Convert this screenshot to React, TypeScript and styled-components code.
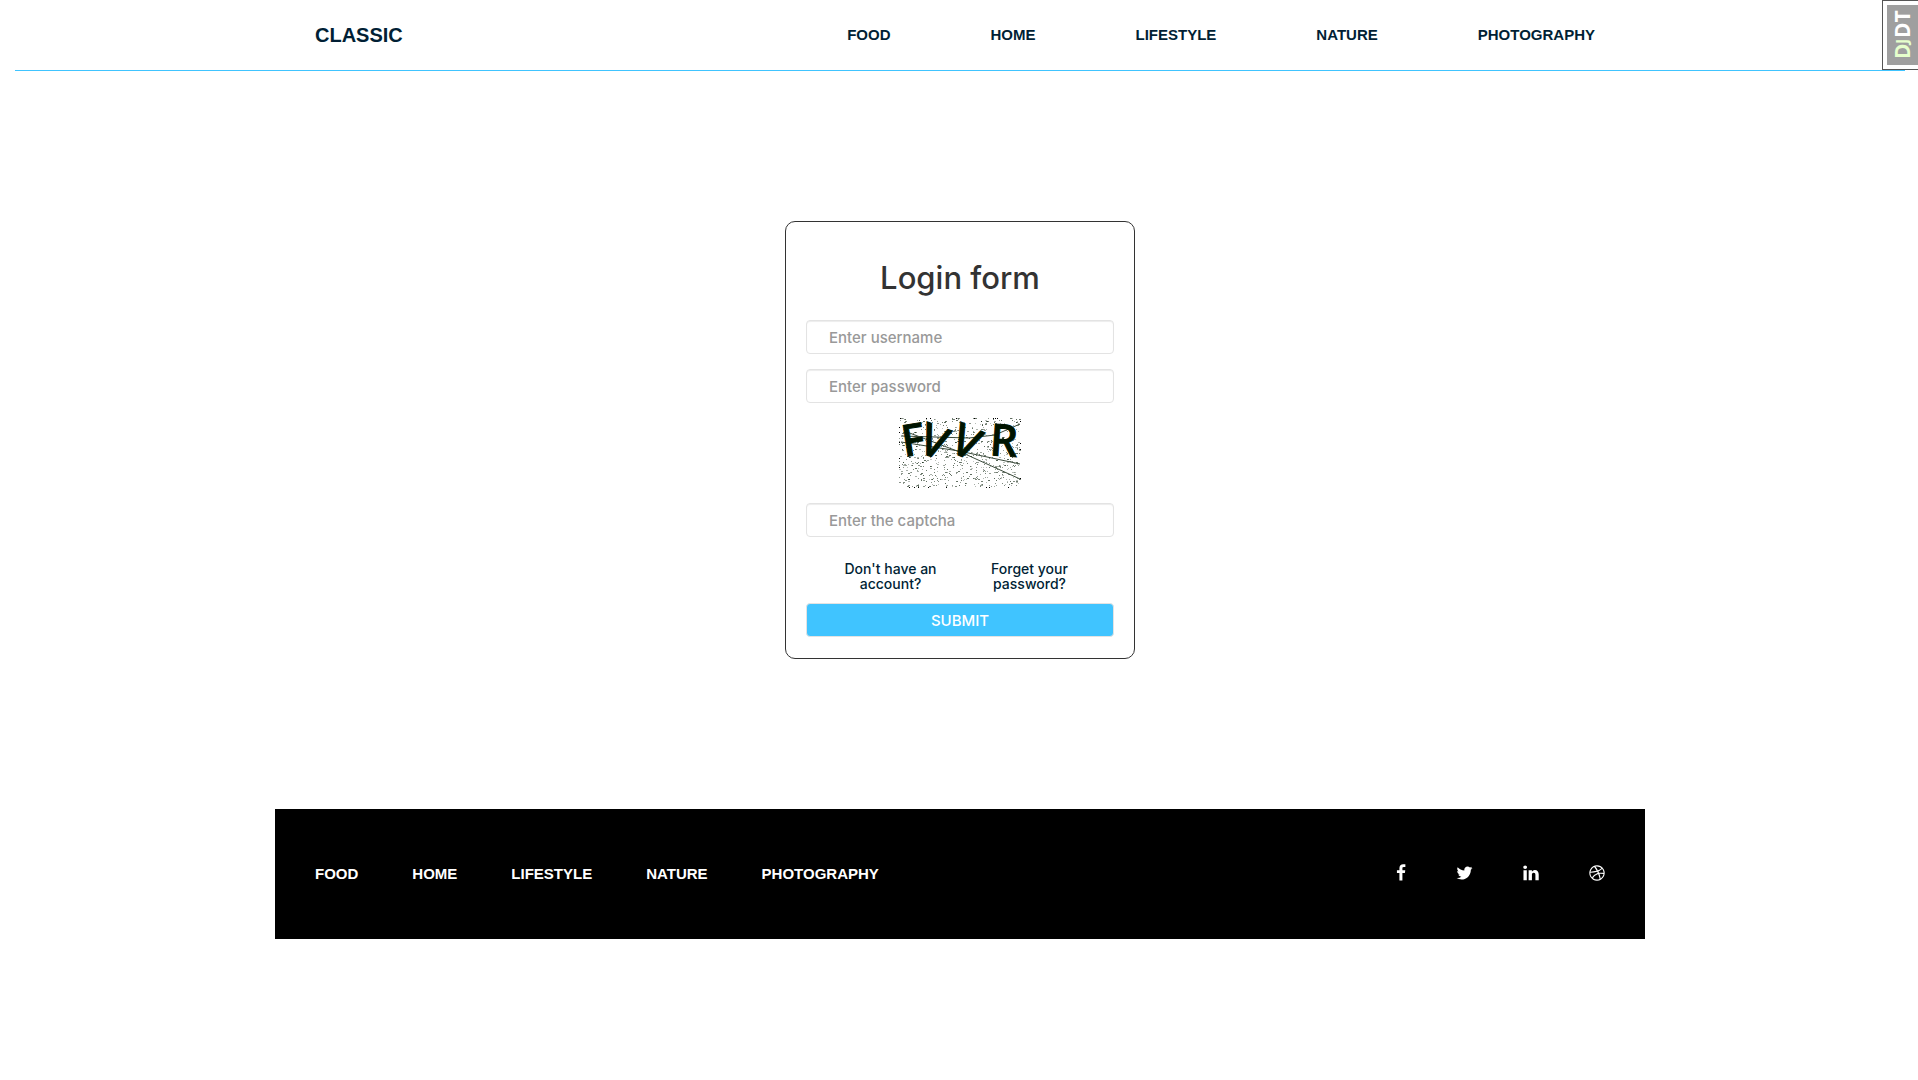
import React from "react";
import styled, { createGlobalStyle, css } from "styled-components";

const navy = "#011f35";
const sky = "#40c4ff";
const formFont = css`
  font-family: Inter, "Open Sans", sans-serif;
  font-weight: 500;
`;

const GlobalStyle = createGlobalStyle`
  *, *::before, *::after { box-sizing: border-box; }
  body {
    margin: 0;
    padding-left: 2px;
    background: #fff;
    color: #333;
    font-family: "Liberation Sans", Arial, sans-serif;
    font-size: 15px;
  }
  a { color: inherit; text-decoration: none; }
`;

const Header = styled.header`
  margin: 0 13px;
  border-bottom: 1px solid ${sky};
`;

const HeaderInner = styled.div`
  max-width: 1290px;
  height: 70px;
  margin: 0 auto;
  padding-right: 10px;
  display: flex;
  align-items: center;
  justify-content: space-between;
`;

const Brand = styled.a`
  && { color: ${navy}; }
  font-size: 20px;
  font-weight: 700;
`;

const NavList = styled.ul<{ $gap: number; $color: string }>`
  display: flex;
  flex-wrap: wrap;
  gap: ${(p) => p.$gap}px;
  margin: 0;
  padding: 0;
  list-style: none;
  font-weight: 700;
  line-height: 20px;
  color: ${(p) => p.$color};
`;

const Main = styled.main`
  display: flex;
  justify-content: center;
  padding: 150px 15px;
`;

const LoginForm = styled.form`
  ${formFont}
  width: 350px;
  display: flex;
  flex-direction: column;
  align-items: stretch;
  gap: 15px;
  padding: 39px 20px 21px;
  border: 1px solid #333;
  border-radius: 10px;
`;

const Title = styled.h2`
  margin: 0 0 10px;
  font-size: 31px;
  line-height: 34px;
  font-weight: 500;
  text-align: center;
`;

const Field = styled.input`
  ${formFont}
  width: 100%;
  height: 34px;
  padding: 6px 22px;
  border: 1px solid #e3e3e3;
  border-radius: 4px;
  box-shadow: inset 0 1px 1px rgba(0, 0, 0, 0.075);
  background: #fff;
  color: #555;
  font-size: 15px;
  &::placeholder { color: #999; opacity: 1; }
`;

const Captcha = styled.svg`
  align-self: center;
  display: block;
  overflow: visible;
`;

const FormLinks = styled.div`
  display: grid;
  grid-template-columns: 1fr 1fr;
  gap: 30px;
  padding: 9px 30px 0;
  margin-bottom: -3px;
  color: ${navy};
  font-size: 14px;
  line-height: 15px;
  text-align: center;
`;

const Submit = styled.button`
  ${formFont}
  height: 34px;
  border: 1px solid #e3e3e3;
  border-radius: 4px;
  background: ${sky};
  color: #fff;
  font-size: 15px;
  cursor: pointer;
`;

const Footer = styled.footer`
  max-width: 1370px;
  min-height: 130px;
  margin: 0 auto;
  padding: 0 40px;
  display: flex;
  align-items: center;
  justify-content: space-between;
  background: #000;
`;

const Social = styled.div`
  display: flex;
  align-items: center;
  gap: 50px;
  padding-bottom: 3px;
  color: #fff;
`;

const SocialIcon = styled.svg<{ $width: number }>`
  display: block;
  width: ${(p) => p.$width}px;
  height: 18px;
  fill: currentColor;
`;

const DebugHandle = styled.button`
  position: fixed;
  top: 0;
  right: 0;
  width: 36px;
  height: 70px;
  padding: 4px 0 4px 4px;
  border: 1px solid #555;
  border-right: 0;
  background: #fff;
`;

const DebugLabel = styled.span`
  display: flex;
  align-items: center;
  justify-content: center;
  width: 31px;
  height: 60px;
  background: #9f9f9f;
  color: #fff;
  font: 700 21px/31px "Open Sans", sans-serif;
  writing-mode: vertical-rl;
  transform: rotate(180deg);
`;

const DebugAccent = styled.span<{ $small?: boolean }>`
  color: #e6ffcc;
  font-size: ${(p) => (p.$small ? 16 : 21)}px;
`;

const categories = ["FOOD", "HOME", "LIFESTYLE", "NATURE", "PHOTOGRAPHY"];

const socials = [
  { name: "Facebook", width: 10, box: "384 0 1024 1792", path: "M1343 12v264h-157q-86 0-116 36t-30 108v189h293l-39 296h-254v759h-306v-759h-255v-296h255v-218q0-186 104-288.500t277-102.500q147 0 228 12z" },
  { name: "Twitter", width: 17, box: "64 0 1664 1792", path: "M1684 408q-67 98-162 167 1 14 1 42 0 130-38 259.500t-115.500 248.500-184.500 210.500-258 146-323 54.500q-271 0-496-145 35 4 78 4 225 0 401-138-105-2-188-64.500t-114-159.500q33 5 61 5 43 0 85-11-112-23-185.500-111.500t-73.500-205.500v-4q68 38 146 41-66-44-105-115t-39-154q0-88 44-163 121 149 294.500 238.500t371.500 99.500q-8-38-8-74 0-134 94.500-228.500t228.500-94.500q140 0 236 102 109-21 205-78-37 115-142 178 93-10 186-50z" },
  { name: "LinkedIn", width: 16, box: "128 0 1536 1792", path: "M477 625v991h-330v-991h330zm21-306q1 73-50.500 122t-135.500 49h-2q-82 0-132-49t-50-122q0-74 51.500-122.500t134.500-48.500 133 48.500 51 122.500zm1166 729v568h-329v-530q0-105-40.500-164.500t-126.500-59.500q-63 0-105.500 34.500t-63.500 85.500q-11 30-11 81v553h-329q2-399 2-647t-1-296l-1-48h329v144h-2q20-32 41-56t56.500-52 87-43.500 114.500-15.500q171 0 275 113.500t104 332.500z" },
  { name: "Dribbble", width: 16, box: "128 0 1536 1792", path: "M1152 1500q-42-241-140-498h-2l-2 1q-16 6-43 16.500t-101 49-137 82-131 114.500-103 148l-15-11q184 150 418 150 132 0 256-52zm-185-607q-21-49-53-111-311 93-673 93-1 7-1 21 0 124 44 236.500t124 201.500q50-89 123.500-166.500t142.500-124.500 130.500-81 99.500-48l37-13q4-1 13-3.500t13-4.500zm-107-212q-120-213-244-378-138 65-234 186t-128 272q302 0 606-80zm684 319q-210-60-409-29 87 239 128 469 111-75 185-189.500t96-250.500zm-805-741q-1 0-2 1 1-1 2-1zm590 145q-185-164-433-164-76 0-155 19 131 170 246 382 69-26 130-60.500t96.500-61.500 65.500-57 37.500-40.500zm223 485q-3-232-149-410l-1 1q-9 12-19 24.500t-43.500 44.500-71 60.500-100 65-131.500 64.500q25 53 44 95 2 5 6.500 17t7.500 17q36-5 74.500-7t73.500-2 69 1.500 64 4 56.500 5.500 48 6.500 36.500 6 25 4.500zm112 7q0 209-103 385.500t-279.500 279.500-385.500 103-385.500-103-279.500-279.500-103-385.500 103-385.500 279.500-279.500 385.500-103 385.500 103 279.500 279.500 103 385.500z" },
];

// Deterministic noise so the captcha looks the same on every render.
function makeSpecks(count: number) {
  let seed = 7919;
  const next = () => {
    seed = (seed * 1103515245 + 12345) % 2147483648;
    return seed / 2147483648;
  };
  return Array.from({ length: count }, () => ({
    x: Math.floor(next() * 121),
    y: Math.floor(next() * 69),
    w: next() > 0.7 ? 2 : 1,
    o: 0.25 + next() * 0.45,
  }));
}
const specks = makeSpecks(800);

const edgeDots = [
  [1, 0], [27, 0], [31, 0], [57, 0], [75, 0], [94, 0], [96, 0], [98, 0],
  [0, 9], [0, 14], [0, 24], [0, 40], [0, 49], [121, 3], [121, 25], [121, 31], [121, 60],
  [10, 69], [15, 69], [19, 69], [29, 69], [47, 69], [87, 69], [90, 69], [109, 69],
];

const letters = [
  { char: "F", x: 5, y: 39, angle: -9, anchor: "start" },
  { char: "V", x: 30, y: 38, angle: 20, anchor: "middle" },
  { char: "V", x: 61, y: 38, angle: 24, anchor: "middle" },
  { char: "R", x: 90, y: 37, angle: 4, anchor: "start" },
] as const;

function CaptchaImage() {
  return (
    <Captcha width="122" height="70" viewBox="0 0 122 70" role="img" aria-label="Captcha">
      {specks.map((s, i) => (
        <rect key={i} x={s.x} y={s.y} width={s.w} height="1" fill="#142814" opacity={s.o} />
      ))}
      {edgeDots.map(([x, y]) => (
        <rect key={`${x}-${y}`} x={x} y={y} width="1" height="1" fill="#000" />
      ))}
      <g stroke="#3a4a3a" strokeWidth="1" fill="none">
        <path d="M2 18L70 20L96 17L121 6M2 24L60 33L121 46M8 14L66 36L121 61" />
      </g>
      <g fill="#001400" stroke="#001400" strokeWidth="1" fontFamily="Noto Sans, sans-serif" fontSize="44">
        {letters.map((l, i) => (
          <text key={i} x={l.x} y={l.y} textAnchor={l.anchor} transform={`rotate(${l.angle} ${l.x} ${l.y})`}>{l.char}</text>
        ))}
      </g>
    </Captcha>
  );
}

function CategoryNav({ gap, color, label }: { gap: number; color: string; label: string }) {
  return (
    <nav aria-label={label}>
      <NavList $gap={gap} $color={color}>
        {categories.map((c) => (
          <li key={c}><a href={`#${c.toLowerCase()}`}>{c}</a></li>
        ))}
      </NavList>
    </nav>
  );
}

export default function App() {
  return (
    <>
      <GlobalStyle />
      <Header>
        <HeaderInner>
          <Brand href="#">CLASSIC</Brand>
          <CategoryNav gap={100} color={navy} label="Main" />
        </HeaderInner>
      </Header>
      <Main>
        <LoginForm onSubmit={(e) => e.preventDefault()}>
          <Title>Login form</Title>
          <Field aria-label="Username" placeholder="Enter username" />
          <Field aria-label="Password" type="password" placeholder="Enter password" />
          <CaptchaImage />
          <Field aria-label="Captcha" placeholder="Enter the captcha" />
          <FormLinks>
            <a href="#register">Don't have an account?</a>
            <a href="#reset">Forget your password?</a>
          </FormLinks>
          <Submit type="submit">SUBMIT</Submit>
        </LoginForm>
      </Main>
      <Footer>
        <CategoryNav gap={54} color="#fff" label="Footer" />
        <Social>
          {socials.map((s) => (
            <a key={s.name} href={`#${s.name.toLowerCase()}`} aria-label={s.name}>
              <SocialIcon $width={s.width} viewBox={s.box} aria-hidden="true"><path d={s.path} /></SocialIcon>
            </a>
          ))}
        </Social>
      </Footer>
      <DebugHandle type="button" aria-label="Show toolbar">
        <DebugLabel>
          <DebugAccent>D</DebugAccent>
          <DebugAccent $small>J</DebugAccent>
          DT
        </DebugLabel>
      </DebugHandle>
    </>
  );
}
